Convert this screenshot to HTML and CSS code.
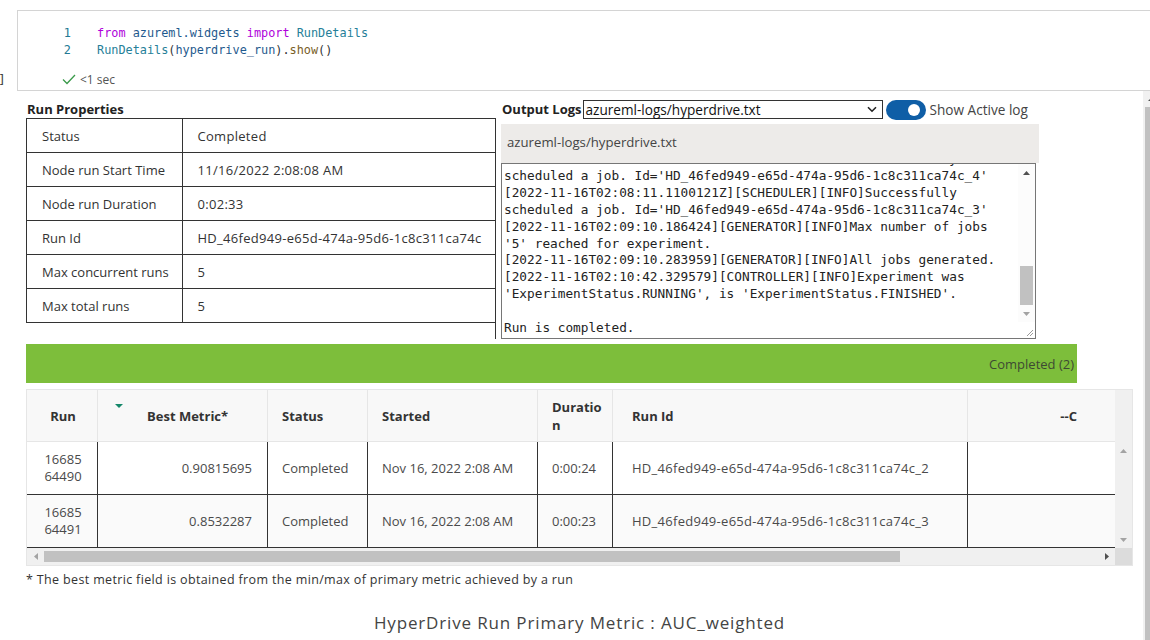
FILE: index.html
```html
<!DOCTYPE html>
<html>
<head>
<meta charset="utf-8">
<link rel="stylesheet" href="styles.css">
</head>
<body>
<div class="cellrow">
  <div class="prompt">]</div>
  <div class="cell">
    <div class="code">
      <div class="ln"><span class="lnum">1</span><span class="kw">from</span> <span class="id">azureml.widgets</span> <span class="kw">import</span> <span class="cls">RunDetails</span></div>
      <div class="ln"><span class="lnum">2</span><span class="cls">RunDetails</span><span class="p">(</span><span class="id">hyperdrive_run</span><span class="p">).</span><span class="fn">show</span><span class="p">()</span></div>
    </div>
    <div class="status">
      <svg class="check" width="14" height="11" viewBox="0 0 14 11"><path d="M1 5.5L5 9.5L13 1" fill="none" stroke="#3a9a4a" stroke-width="1.3"/></svg>
      <span>&lt;1 sec</span>
    </div>
  </div>
</div>

<div class="output">
  <div class="widget">
    <div class="top">
      <div class="props">
        <div class="title ptitle">Run Properties</div>
        <table class="ptable">
          <colgroup><col class="pc1"><col class="pc2"></colgroup>
          <tr><td>Status</td><td>Completed</td></tr>
          <tr><td>Node run Start Time</td><td>11/16/2022 2:08:08 AM</td></tr>
          <tr><td>Node run Duration</td><td>0:02:33</td></tr>
          <tr><td>Run Id</td><td>HD_46fed949-e65d-474a-95d6-1c8c311ca74c</td></tr>
          <tr><td>Max concurrent runs</td><td>5</td></tr>
          <tr><td>Max total runs</td><td>5</td></tr>
        </table>
        <div class="fill"></div>
      </div>
      <div class="logs">
        <div class="loghead">
          <span class="title">Output Logs</span>
          <div class="select">
            <span>azureml-logs/hyperdrive.txt</span>
            <svg width="10" height="7" viewBox="0 0 10 7"><path d="M1 1.2L5 5.2L9 1.2" fill="none" stroke="#222" stroke-width="1.6"/></svg>
          </div>
          <div class="toggle"><span class="knob"></span></div>
          <span class="toglabel">Show Active log</span>
        </div>
        <div class="logname">azureml-logs/hyperdrive.txt</div>
        <div class="logbox">
          <div class="logtext"><pre>[2022-11-16T02:08:10.9848727Z][SCHEDULER][INFO]Successfully
scheduled a job. Id='HD_46fed949-e65d-474a-95d6-1c8c311ca74c_4'
[2022-11-16T02:08:11.1100121Z][SCHEDULER][INFO]Successfully
scheduled a job. Id='HD_46fed949-e65d-474a-95d6-1c8c311ca74c_3'
[2022-11-16T02:09:10.186424][GENERATOR][INFO]Max number of jobs
'5' reached for experiment.
[2022-11-16T02:09:10.283959][GENERATOR][INFO]All jobs generated.
[2022-11-16T02:10:42.329579][CONTROLLER][INFO]Experiment was
'ExperimentStatus.RUNNING', is 'ExperimentStatus.FINISHED'.

Run is completed.</pre></div>
          <div class="lscroll">
            <div class="arrow"><svg width="7" height="4" viewBox="0 0 7 4"><path d="M3.5 0L7 4H0z" fill="#505050"/></svg></div>
            <div class="ltrack"><div class="lthumb"></div></div>
            <div class="arrow"><svg width="7" height="4" viewBox="0 0 7 4"><path d="M0 0H7L3.5 4z" fill="#a3a3a3"/></svg></div>
            <div class="lcorner"><svg width="9" height="9" viewBox="0 0 9 9"><path d="M8 2L2 8M8 5L5 8" stroke="#9a9a9a" stroke-width="1"/></svg></div>
          </div>
        </div>
      </div>
    </div>

    <div class="greenbar">Completed (2)</div>

    <div class="grid">
      <div class="gtable">
        <table class="runs">
          <colgroup><col class="c1"><col class="c2"><col class="c3"><col class="c4"><col class="c5"><col class="c6"><col class="c7"></colgroup>
          <thead>
            <tr>
              <th class="center">Run</th>
              <th class="metric"><span class="sort"></span>Best Metric*</th>
              <th>Status</th>
              <th>Started</th>
              <th class="dur">Duration</th>
              <th class="rid">Run Id</th>
              <th class="last">--C</th>
            </tr>
          </thead>
          <tbody>
            <tr>
              <td class="center runno">1668564490</td>
              <td class="val">0.90815695</td>
              <td>Completed</td>
              <td>Nov 16, 2022 2:08 AM</td>
              <td>0:00:24</td>
              <td class="rid">HD_46fed949-e65d-474a-95d6-1c8c311ca74c_2</td>
              <td class="last"></td>
            </tr>
            <tr class="alt">
              <td class="center runno">1668564491</td>
              <td class="val">0.8532287</td>
              <td>Completed</td>
              <td>Nov 16, 2022 2:08 AM</td>
              <td>0:00:23</td>
              <td class="rid">HD_46fed949-e65d-474a-95d6-1c8c311ca74c_3</td>
              <td class="last"></td>
            </tr>
          </tbody>
        </table>
      </div>
      <div class="hfill"></div>
      <div class="gvscroll">
        <div class="arrow"><svg width="7" height="4" viewBox="0 0 7 4"><path d="M3.5 0L7 4H0z" fill="#a3a3a3"/></svg></div>
        <div class="arrow"><svg width="7" height="4" viewBox="0 0 7 4"><path d="M0 0H7L3.5 4z" fill="#a3a3a3"/></svg></div>
      </div>
      <div class="ghscroll">
        <div class="harrow"><svg width="4" height="7" viewBox="0 0 4 7"><path d="M4 0V7L0 3.5z" fill="#a3a3a3"/></svg></div>
        <div class="htrack"><div class="hthumb"></div></div>
        <div class="harrow"><svg width="4" height="7" viewBox="0 0 4 7"><path d="M0 0L4 3.5L0 7z" fill="#505050"/></svg></div>
      </div>
      <div class="gcorner"></div>
    </div>

    <div class="footnote">* The best metric field is obtained from the min/max of primary metric achieved by a run</div>
    <div class="primary">HyperDrive Run Primary Metric : AUC_weighted</div>
  </div>
  <div class="pagescroll">
    <div class="parrow"><svg width="8" height="4" viewBox="0 0 8 4"><path d="M4 0L8 4H0z" fill="#505050"/></svg></div>
    <div class="pthumb"></div>
  </div>
</div>
</body>
</html>
```

FILE: styles.css
```css
* { box-sizing: border-box; }
html, body { margin: 0; padding: 0; background: #fff; overflow: hidden; }
body {
  width: 1150px;
  height: 640px;
  font-family: "Open Sans", "Noto Sans", sans-serif;
  color: #333;
}

/* ---------- code cell ---------- */
.cellrow { display: flex; margin-top: 10px; height: 81px; }
.prompt {
  flex: none;
  width: 19px;
  margin-left: -2px;
  align-self: flex-end;
  padding-bottom: 3px;
  font: 13px/16px "DejaVu Sans Mono", monospace;
  color: #444;
}
.cell {
  flex: none;
  width: 1150px;
  border: 1px solid #d4d4d4;
  display: flex;
  flex-direction: column;
}
.code { padding-top: 14px; font: 11.85px/17px "DejaVu Sans Mono", monospace; }
.ln { white-space: pre; height: 17px; color: #1f5a8e; }
.lnum { display: inline-block; width: 53px; text-align: right; margin-right: 26px; color: #237893; }
.kw { color: #af00db; }
.id { color: #1f5a8e; }
.cls { color: #267f99; }
.fn { color: #795e26; }
.p { color: #333; }
.status {
  margin-top: auto;
  height: 18px;
  padding: 0 0 3px 44px;
  display: flex;
  align-items: center;
  gap: 4px;
  font-size: 12px;
  color: #555;
}
.check { flex: none; }

/* ---------- output area ---------- */
.output { display: flex; height: 549px; }
.widget { flex: none; width: 1143px; padding: 0 10px 0 26px; }
.pagescroll {
  flex: none;
  width: 17px;
  background: #f1f1f1;
  display: flex;
  flex-direction: column;
  align-items: center;
}
.parrow { height: 16px; display: flex; align-items: center; justify-content: center; }
.pthumb { flex: 1; width: 13px; background: #c1c1c1; }

.top { display: flex; gap: 5px; height: 248px; }
.title { font-weight: 700; font-size: 13px; line-height: 17px; color: #222; }

.props { flex: none; width: 470px; display: flex; flex-direction: column; }
.ptitle { padding-top: 10px; height: 27px; margin-left: 1px; }
.ptable { border-collapse: collapse; width: 470px; font-size: 13px; color: #333; }
.pc1 { width: 157px; }
.pc2 { width: 313px; }
.ptable td { border: 1px solid #333; height: 34px; padding: 0 0 0 15px; white-space: nowrap; }
.ptable td + td { padding-left: 14px; letter-spacing: 0.3px; }
.fill { flex: 1; border-right: 1px solid #333; }

.logs { flex: none; width: 538px; display: flex; flex-direction: column; }
.loghead { display: flex; align-items: center; height: 21px; margin-top: 8px; }
.loghead .title { margin-left: 1px; }
.select {
  width: 300px;
  height: 19px;
  margin-left: 1px;
  border: 1px solid #333;
  display: flex;
  align-items: center;
  justify-content: space-between;
  padding: 0 5px 0 2px;
  font-size: 13.6px;
  color: #111;
}
.toggle {
  width: 40px;
  height: 20px;
  margin-left: 3px;
  border-radius: 10px;
  background: #0f5ea6;
  display: flex;
  align-items: center;
  justify-content: flex-end;
  padding-right: 6px;
}
.knob { width: 12px; height: 12px; border-radius: 50%; background: #fff; }
.toglabel { margin-left: 4px; font-size: 13.6px; color: #444; }

.logname {
  margin-top: 4px;
  height: 39px;
  background: #edebe9;
  padding: 9px 6px 12px;
  font-size: 13.2px;
  line-height: 18px;
  color: #444;
}
.logbox {
  width: 535px;
  height: 176px;
  border: 1px solid #767676;
  display: flex;
  background: #fff;
}
.logtext { flex: 1; overflow: hidden; padding-left: 2px; }
.logtext pre {
  margin: -13px 0 0;
  font: 12.75px/16.9px "DejaVu Sans Mono", monospace;
  color: #222;
}
.lscroll { flex: none; width: 17px; display: flex; flex-direction: column; background: #fcfcfc; }
.arrow { height: 17px; flex: none; display: flex; align-items: center; justify-content: center; }
.ltrack { flex: 1; display: flex; flex-direction: column; justify-content: flex-end; }
.lthumb { height: 39px; margin: 0 2px; background: #c1c1c1; }
.lcorner { height: 16px; flex: none; display: flex; align-items: flex-end; justify-content: flex-end; padding: 0 1px 1px 0; background: #fff; }

/* ---------- status bar ---------- */
.greenbar {
  margin-top: 5px;
  width: 1051px;
  height: 39px;
  background: #7dbe3b;
  text-align: right;
  padding-right: 3px;
  font-size: 13px;
  line-height: 40px;
  color: #3d4a33;
}

/* ---------- runs grid ---------- */
.grid {
  margin-top: 6px;
  width: 1107px;
  height: 177px;
  border: 1px solid #e6e6e6;
  display: grid;
  grid-template-columns: 1088px 17px;
  grid-template-rows: 52px 106px 17px;
  grid-template-areas: "tbl hf" "tbl vs" "hs cn";
  background: #fff;
}
.gtable { grid-area: tbl; overflow: hidden; }
.hfill { grid-area: hf; background: #f0f0f0; }
.gvscroll { grid-area: vs; background: #f0f0f0; display: flex; flex-direction: column; justify-content: space-between; }
.ghscroll { grid-area: hs; background: #f0f0f0; display: flex; }
.gcorner { grid-area: cn; background: #dcdcdc; }
.harrow { width: 17px; flex: none; display: flex; align-items: center; justify-content: center; }
.htrack { flex: 1; padding: 3px 0; }
.hthumb { width: 856px; height: 11px; background: #c1c1c1; }

.runs { border-collapse: separate; border-spacing: 0; table-layout: fixed; width: 1088px; font-size: 13px; }
.c1 { width: 71px; } .c2 { width: 170px; } .c3 { width: 100px; } .c4 { width: 170px; }
.c5 { width: 75px; } .c6 { width: 355px; } .c7 { width: 147px; }
.runs th {
  height: 52px;
  background: #f8f8f8;
  border-right: 1px solid #e6e6e6;
  border-bottom: 1px solid #e6e6e6;
  text-align: left;
  font-weight: 700;
  color: #333;
  padding: 0 5px 0 14px;
  line-height: 18px;
  vertical-align: middle;
}
.runs th.center, .runs td.center { text-align: center; padding: 0 14px 0 16px; }
.runs th.metric { position: relative; padding-left: 49px; }
.sort {
  position: absolute;
  left: 17px;
  top: 14px;
  width: 0;
  height: 0;
  border-left: 4px solid transparent;
  border-right: 4px solid transparent;
  border-top: 4px solid #15886a;
}
.runs th.dur { word-break: break-all; }
.runs th.rid, .runs td.rid { padding-left: 19px; }
.runs td.rid { letter-spacing: 0.28px; }
.runs th.last { text-align: right; padding-right: 38px; border-right: none; }
.runs td {
  height: 53px;
  border-right: 1px solid #333;
  border-bottom: 1px solid #333;
  padding: 0 5px 0 14px;
  color: #4a4a4a;
  background: #fff;
  vertical-align: middle;
  white-space: nowrap;
}
.runs tr.alt td { background: #fafafa; }
.runs td.runno { white-space: normal; word-break: break-all; line-height: 17px; }
.runs td.val { text-align: right; padding-right: 15px; }
.runs td.last { border-right: none; }

/* ---------- footer ---------- */
.footnote { padding-top: 6px; font-size: 12.5px; line-height: 16px; letter-spacing: 0.35px; color: #333; }
.primary {
  margin-top: 23px;
  text-align: center;
  font-size: 17px;
  line-height: 24px;
  letter-spacing: 0.85px;
  color: #444;
}
```
